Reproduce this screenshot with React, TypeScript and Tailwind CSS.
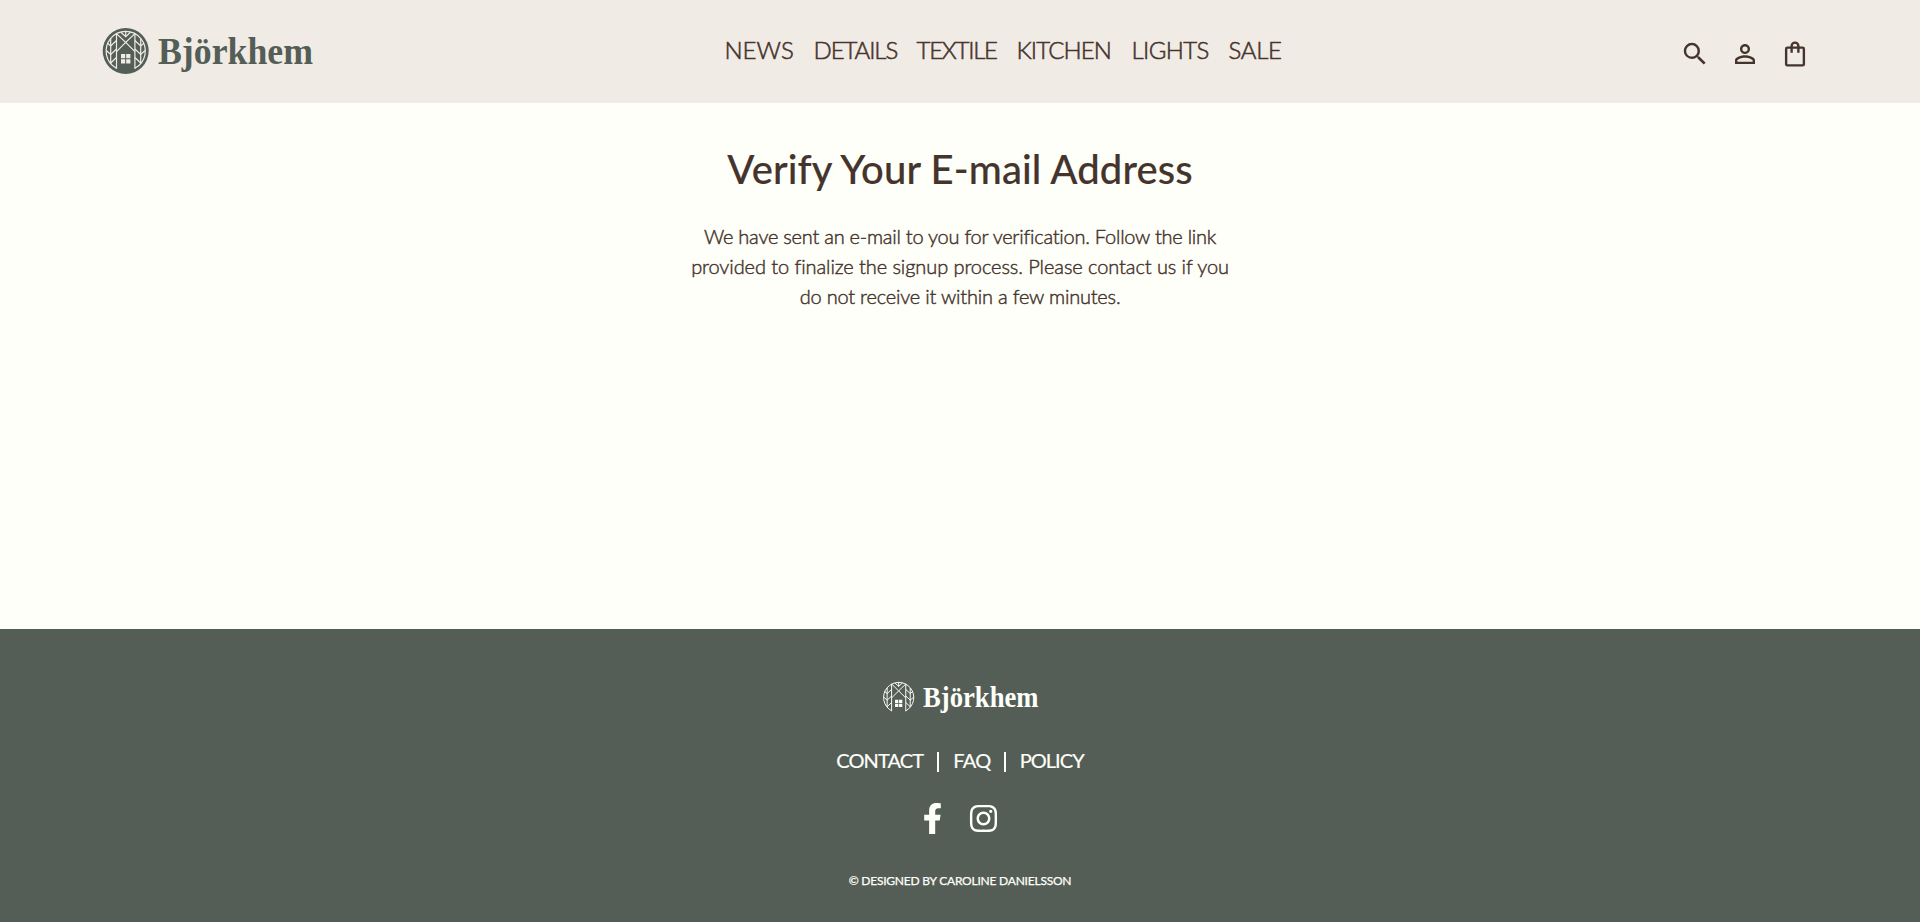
import { FaFacebookF, FaInstagram } from "react-icons/fa";
import { MdPersonOutline, MdSearch } from "react-icons/md";

const NAV = [
  { label: "NEWS", box: "w-[89px] tracking-[0px]" },
  { label: "DETAILS", box: "w-[103px] tracking-[-1.1px]" },
  { label: "TEXTILE", box: "w-[100px] tracking-[-1.25px]" },
  { label: "KITCHEN", box: "w-[115px] tracking-[-0.9px]" },
  { label: "LIGHTS", box: "w-[97px] tracking-[-0.6px]" },
  { label: "SALE", box: "w-[54px] tracking-[-0.3px]" },
];

function Emblem({ solid }: { solid: boolean }) {
  const line = solid ? "#f0ebe5" : "#fffffa";
  return (
    <g>
      {solid && <circle cx="24" cy="24" r="23" fill="#545e56" />}
      <g fill="none" stroke={line} strokeWidth={solid ? 1.2 : 1.25}>
        <path d="M14.8 41.3A19.6 19.6 0 1 1 33.2 41.3" />
        <path d="M14.8 6.6V41.8M33.2 6.6V41.8" />
        <path d="M14.8 6.6 24 15.4 33.2 6.6M24 4.4V9.6" />
        <path d="M19.2 5.2 24 9.6 28.8 5.2" />
        <path d="M24 15.4 14.8 24.6M24 15.4 33.2 24.6" />
        <path d="M9 11.5V36.5M39 11.5V36.5" />
        <path d="M14.8 13.5 9 19 5.6 16M14.8 22 9 27.5 4.6 23.5M14.8 30.5 9 36" />
        <path d="M33.2 13.5 39 19 42.4 16M33.2 22 39 27.5 43.4 23.5M33.2 30.5 39 36" />
      </g>
      <path
        fill={line}
        d="M19.3 27h4.2v4.2h-4.2zM24.5 27h4.2v4.2h-4.2zM19.3 32.2h4.2v4.2h-4.2zM24.5 32.2h4.2v4.2h-4.2z"
      />
    </g>
  );
}

function HeaderLogo() {
  return (
    <svg width="220" height="60" viewBox="0 0 220 60" aria-label="Björkhem">
      <g transform="translate(-.3 6)">
        <Emblem solid />
      </g>
      <text
        x="56"
        y="42.7"
        fontFamily="'Liberation Serif', serif"
        fontWeight="700"
        fontSize="38"
        textLength="155"
        lengthAdjust="spacingAndGlyphs"
        fill="#545e56"
      >
        Björkhem
      </text>
    </svg>
  );
}

function FooterLogo() {
  return (
    <svg width="172" height="50" viewBox="0 0 172 50" aria-label="Björkhem">
      <g transform="translate(-1.8 3) scale(.77)">
        <Emblem solid={false} />
      </g>
      <text
        x="41"
        y="31.2"
        fontFamily="'Liberation Serif', serif"
        fontWeight="700"
        fontSize="29"
        textLength="115.5"
        lengthAdjust="spacingAndGlyphs"
        fill="#fffffa"
      >
        Björkhem
      </text>
    </svg>
  );
}

function BagIcon() {
  return (
    <svg width="30" height="30" viewBox="0 0 24 24" fill="none" stroke="currentColor" strokeWidth="1.9">
      <rect x="4.9" y="6.9" width="14.2" height="14.2" rx="1" />
      <path d="M9.3 11V5.6a2.7 2.7 0 0 1 5.4 0V11" />
    </svg>
  );
}

export default function App() {
  return (
    <div className="flex h-[922px] flex-col bg-[#fffffa] font-['Lato',sans-serif] text-[#45342c]">
      <header className="flex h-[103px] shrink-0 items-start bg-[#f0ebe5] pr-[110px] pl-[102px]">
        <div className="pt-[21px]">
          <HeaderLogo />
        </div>
        <nav className="ml-[402.5px] flex pt-[34px] text-2xl leading-8 font-light [-webkit-text-stroke:0.55px_#45342c]">
          {NAV.map((item) => (
            <a key={item.label} className={item.box}>
              {item.label}
            </a>
          ))}
        </nav>
        <div className="ml-auto flex gap-5 pt-[39px]">
          <MdSearch size={30} />
          <MdPersonOutline size={30} />
          <BagIcon />
        </div>
      </header>

      <main className="flex grow flex-col items-center pt-[42px] text-center">
        <h1 className="text-[40px] leading-[48px] font-medium tracking-[0.1px] [-webkit-text-stroke:0.15px_#45342c]">
          Verify Your E-mail Address
        </h1>
        <p className="mt-[28px] flex flex-col text-xl leading-[30px] font-light [-webkit-text-stroke:0.45px_#45342c]">
          <span className="tracking-[-0.24px]">We have sent an e-mail to you for verification. Follow the link</span>
          <span className="tracking-[-0.08px]">provided to finalize the signup process. Please contact us if you</span>
          <span className="tracking-[-0.2px]">do not receive it within a few minutes.</span>
        </p>
      </main>

      <footer className="flex h-[293px] shrink-0 flex-col items-center bg-[#545e56] text-[#fffffa]">
        <div className="mt-[47px] ml-[16px]">
          <FooterLogo />
        </div>
        <div className="mt-[19px] flex items-center text-xl leading-[30px] [-webkit-text-stroke:0.2px_#fffffa]">
          <a className="tracking-[-0.9px]">CONTACT</a>
          <span className="mt-[3px] mr-[14px] ml-[14px] h-5 w-[2px] bg-[#fffffa]" />
          <a className="tracking-[-0.6px]">FAQ</a>
          <span className="mt-[3px] mr-[14px] ml-[13px] h-5 w-[2px] bg-[#fffffa]" />
          <a className="tracking-[-0.95px]">POLICY</a>
        </div>
        <div className="mt-[28px] ml-[-4px] flex gap-[20px]">
          <FaFacebookF size={31} />
          <FaInstagram size={31} />
        </div>
        <p className="mt-[38px] text-xs leading-[18px] tracking-[-0.22px] [-webkit-text-stroke:0.25px_#fffffa]">
          © DESIGNED BY CAROLINE DANIELSSON
        </p>
      </footer>
    </div>
  );
}
